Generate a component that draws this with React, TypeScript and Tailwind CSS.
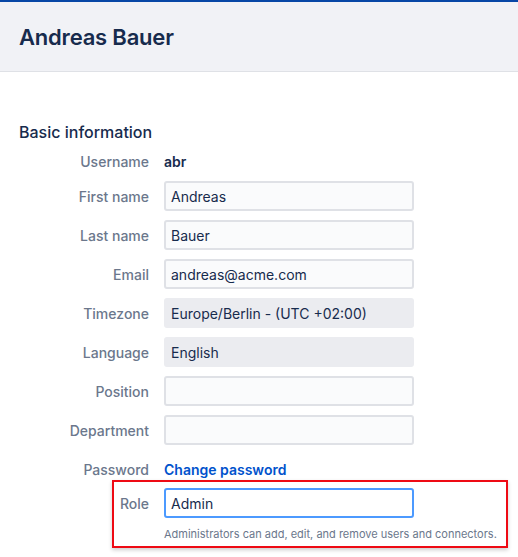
import React from 'react';

type Field = {
  label: string;
  value: string;
  kind: 'text' | 'input' | 'disabled' | 'link';
};

const fields: Field[] = [
  { label: 'Username', value: 'abr', kind: 'text' },
  { label: 'First name', value: 'Andreas', kind: 'input' },
  { label: 'Last name', value: 'Bauer', kind: 'input' },
  { label: 'Email', value: 'andreas@acme.com', kind: 'input' },
  { label: 'Timezone', value: 'Europe/Berlin - (UTC +02:00)', kind: 'disabled' },
  { label: 'Language', value: 'English', kind: 'disabled' },
  { label: 'Position', value: '', kind: 'input' },
  { label: 'Department', value: '', kind: 'input' },
  { label: 'Password', value: 'Change password', kind: 'link' },
];

function Control({ field }: { field: Field }) {
  if (field.kind === 'text') {
    return <span className="font-semibold text-[#172b4d]">{field.value}</span>;
  }
  if (field.kind === 'link') {
    return <a className="font-semibold text-[#0052cc]">{field.value}</a>;
  }
  if (field.kind === 'disabled') {
    return (
      <div className="flex h-[30px] w-[250px] items-center rounded-[3px] bg-[#ebecf0] px-[7px] text-[#172b4d]">
        {field.value}
      </div>
    );
  }
  return (
    <div className="flex h-[30px] w-[250px] items-center rounded-[3px] border-2 border-[#dfe1e6] bg-[#fafbfc] px-[5px] text-[#172b4d]">
      {field.value}
    </div>
  );
}

export default function App() {
  return (
    <div className="min-h-[557px] w-full bg-white font-['Inter',sans-serif] text-[14px]">
      <header className="h-[72px] border-t-2 border-b border-t-[#0747a6] border-b-[#dfe1e6] bg-[#f1f2f6] px-[19px] pt-[20px]">
        <h1 className="text-[22px] leading-[30px] font-semibold tracking-[-0.2px] text-[#172b4d]">
          Andreas Bauer
        </h1>
      </header>

      <main className="px-[19px] pt-[50px]">
        <h2 className="text-[16px] leading-[20px] font-medium text-[#172b4d]">Basic information</h2>

        <div className="mt-[9px] flex flex-col">
          {fields.map((field, i) => (
            <div
              key={field.label}
              className={
                field.kind === 'text'
                  ? 'flex h-[20px] items-center gap-[15px]'
                  : field.kind === 'link'
                    ? 'mt-[14px] flex h-[20px] items-center gap-[15px]'
                    : i === 1
                      ? 'mt-[10px] flex items-center gap-[15px]'
                      : 'mt-[9px] flex items-center gap-[15px]'
              }
            >
              <label className="w-[130px] text-right font-medium text-[#6b778c]">{field.label}</label>
              <Control field={field} />
            </div>
          ))}
        </div>

        <div className="ml-[93px] mt-[1px] w-[396px] border-2 border-[#ee0a14] pt-[6px] pb-[5px] shadow-[0_2px_4px_rgba(0,0,0,0.2)]">
          <div className="flex items-center gap-[15px]">
            <label className="w-[35px] text-right font-medium text-[#6b778c]">Role</label>
            <div className="flex h-[30px] w-[250px] items-center rounded-[3px] border-2 border-[#4c9aff] bg-white px-[5px] text-[#172b4d]">
              Admin
            </div>
          </div>
          <p className="mt-[9px] pl-[50px] text-[11px] leading-[14px] text-[#6b778c]">
            Administrators can add, edit, and remove users and connectors.
          </p>
        </div>
      </main>
    </div>
  );
}
